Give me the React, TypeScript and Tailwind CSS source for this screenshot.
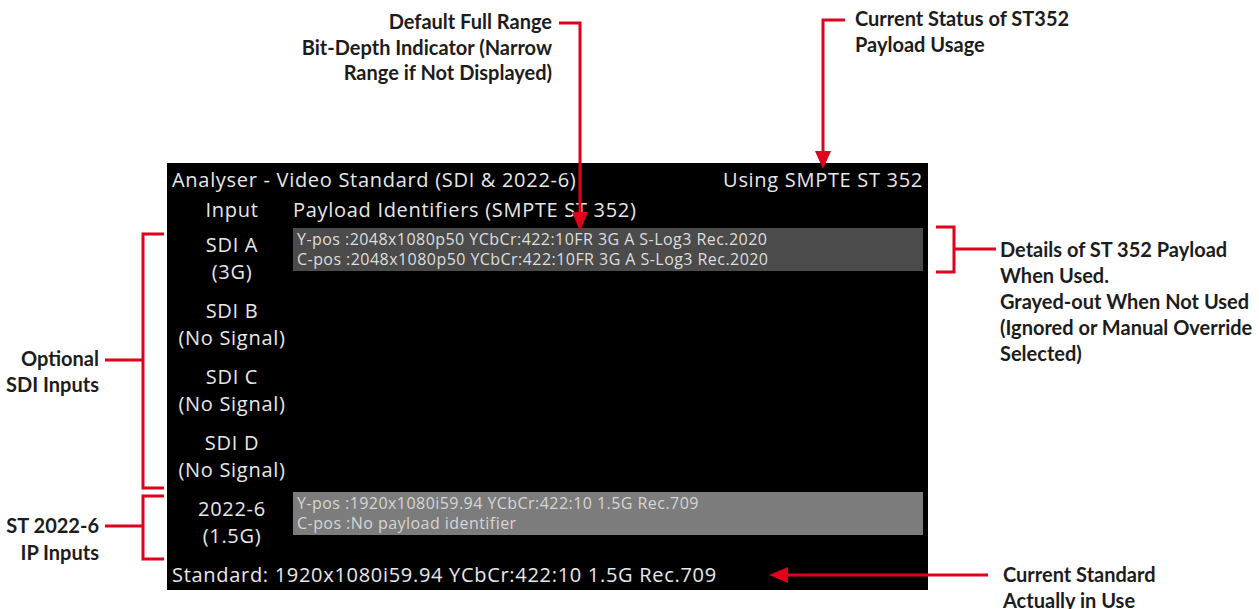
import React from "react";

type Block = {
  name: string;
  sub: string;
  payload?: { lines: string[]; tone: "used" | "grey" };
};

const blocks: Block[] = [
  {
    name: "SDI A",
    sub: "(3G)",
    payload: {
      tone: "used",
      lines: [
        "Y-pos :2048x1080p50 YCbCr:422:10FR 3G A S-Log3 Rec.2020",
        "C-pos :2048x1080p50 YCbCr:422:10FR 3G A S-Log3 Rec.2020",
      ],
    },
  },
  { name: "SDI B", sub: "(No Signal)" },
  { name: "SDI C", sub: "(No Signal)" },
  { name: "SDI D", sub: "(No Signal)" },
  {
    name: "2022-6",
    sub: "(1.5G)",
    payload: {
      tone: "grey",
      lines: [
        "Y-pos :1920x1080i59.94 YCbCr:422:10 1.5G Rec.709",
        "C-pos :No payload identifier",
      ],
    },
  },
];

const screenFont = { fontFamily: '"Open Sans", "Noto Sans", sans-serif' };
const noteFont = { fontFamily: 'Lato, "Liberation Sans", sans-serif' };

function Screen() {
  return (
    <div
      className="ml-[167px] mt-[163px] flex h-[427px] w-[761px] flex-col bg-black pt-[3px] text-[20px] leading-[27px] tracking-[0.7px] text-[#e8e8e8]"
      style={screenFont}
    >
      <div className="flex justify-between pl-[5px] pr-[5px]">
        <span>Analyser - Video Standard (SDI &amp; 2022-6)</span>
        <span>Using SMPTE ST 352</span>
      </div>

      <div className="mt-[3px] flex">
        <div className="w-[126px] pl-[4px] text-center">Input</div>
        <div>Payload Identifiers (SMPTE ST 352)</div>
      </div>

      <div className="mt-[8px] flex flex-col gap-[12px]">
        {blocks.map((block) => (
          <div key={block.name} className="flex h-[54px]">
            <div className="w-[126px] pl-[4px] text-center">
              <p>{block.name}</p>
              <p>{block.sub}</p>
            </div>

            {block.payload && (
              <div className="flex-1 pr-[5px]">
                <div
                  className={`-mt-[3px] h-[43px] py-[1px] pl-[4px] text-[16px] leading-[20px] tracking-[0.45px] ${
                    block.payload.tone === "used"
                      ? "bg-[#4b4b4b] text-[#dedede]"
                      : "bg-[#7c7c7c] text-[#d6d6d6]"
                  }`}
                >
                  {block.payload.lines.map((line) => (
                    <p key={line}>{line}</p>
                  ))}
                </div>
              </div>
            )}
          </div>
        ))}
      </div>

      <div className="mt-[12px] pl-[5px]">
        Standard: 1920x1080i59.94 YCbCr:422:10 1.5G Rec.709
      </div>
    </div>
  );
}

function Arrows() {
  const red = "#e0001b";
  return (
    <svg
      className="pointer-events-none absolute left-0 top-0"
      width="1259"
      height="609"
      viewBox="0 0 1259 609"
      fill="none"
    >
      <g stroke={red} strokeWidth="3">
        <path d="M559 23 H580 V215" />
        <path d="M845 20 H823 V154" />
        <path d="M936 227 H954 V272 H936 M954 249 H996" />
        <path d="M164 234 H143 V488 H164 M105 360 H143" />
        <path d="M164 496 H143 V559 H164 M105 526 H143" />
        <path d="M786 575 H988" />
      </g>
      <g fill={red}>
        <polygon points="572,212 588,212 580,231" />
        <polygon points="815,151 831,151 823,169" />
        <polygon points="769,575 788,567 788,583" />
      </g>
    </svg>
  );
}

export default function App() {
  return (
    <div className="relative h-[609px] w-[1259px] overflow-hidden bg-white">
      <Screen />

      <div
        className="absolute inset-0 text-[20px] font-bold leading-[25.5px] text-[#1c1c1c]"
        style={noteFont}
      >
        <div className="absolute right-[707px] top-[9px] text-right">
          <p>Default Full Range</p>
          <p>Bit-Depth Indicator (Narrow</p>
          <p>Range if Not Displayed)</p>
        </div>

        <div className="absolute left-[855px] top-[6px]">
          <p>Current Status of ST352</p>
          <p>Payload Usage</p>
        </div>

        <div className="absolute left-[1000px] top-[236px] leading-[26px]">
          <p>Details of ST 352 Payload</p>
          <p>When Used.</p>
          <p>Grayed-out When Not Used</p>
          <p>(Ignored or Manual Override</p>
          <p>Selected)</p>
        </div>

        <div className="absolute right-[1160px] top-[346px] text-right">
          <p>Optional</p>
          <p>SDI Inputs</p>
        </div>

        <div className="absolute right-[1160px] top-[512px] text-right leading-[27px]">
          <p>ST 2022-6</p>
          <p>IP Inputs</p>
        </div>

        <div className="absolute left-[1003px] top-[562px]">
          <p>Current Standard</p>
          <p>Actually in Use</p>
        </div>
      </div>

      <Arrows />
    </div>
  );
}
